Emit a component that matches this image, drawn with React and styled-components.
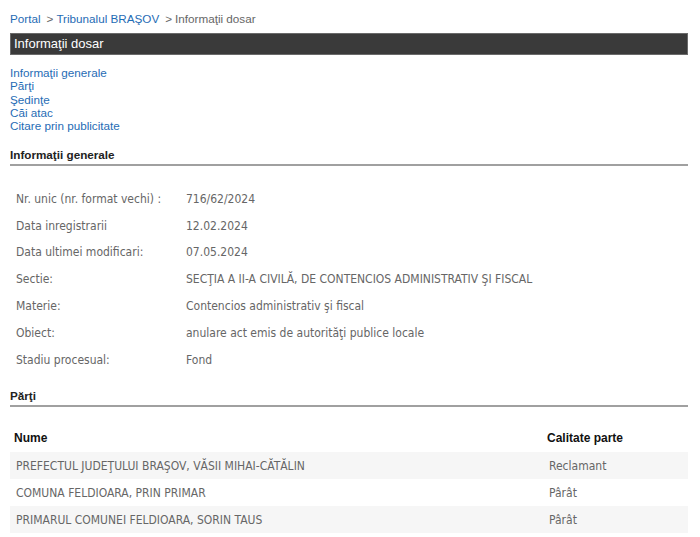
import React from "react";
import styled, { createGlobalStyle } from "styled-components";

const Global = createGlobalStyle`
  body {
    margin: 0;
    background: #fff;
    font-family: "Liberation Sans", Arial, sans-serif;
  }
`;

const Page = styled.div`
  padding: 12px 12px 0 10px;
  width: 678px;
`;

const Crumbs = styled.div`
  font-size: 11.7px;
  color: #666;
  height: 14px;
  line-height: 14px;
  a {
    color: #1f6cb5;
    text-decoration: none;
  }
  span {
    margin: 0 3px 0 6px;
  }
`;

const TitleBar = styled.div`
  margin-top: 7px;
  background: #3a3a3a;
  border: 1px solid #6a6a6a;
  color: #fff;
  font-size: 13px;
  height: 20px;
  line-height: 20px;
  padding-left: 3px;
`;

const Links = styled.div`
  margin-top: 11px;
  display: flex;
  flex-direction: column;
  font-size: 11.7px;
  line-height: 13.3px;
  a {
    color: #1f6cb5;
    text-decoration: none;
  }
`;

const SectionHead = styled.div`
  margin-top: ${(p) => p.$top}px;
  font-size: 11.7px;
  font-weight: bold;
  color: #222;
  padding-bottom: 3px;
  border-bottom: 2px solid #a0a0a0;
`;

const Details = styled.div`
  margin-top: 19px;
  display: flex;
  flex-direction: column;
`;

const DetailRow = styled.div`
  display: grid;
  grid-template-columns: 170px 1fr;
  padding-left: 6px;
  height: 26.8px;
  align-items: center;
  font-family: "DejaVu Sans Condensed", "DejaVu Sans", sans-serif;
  font-size: 12px;
  color: #666;
`;

const Table = styled.div`
  margin-top: 16px;
  display: flex;
  flex-direction: column;
`;

const TRow = styled.div`
  display: grid;
  grid-template-columns: 533px 1fr;
  height: ${(p) => (p.$head ? 29 : 27)}px;
  align-items: center;
  padding-left: 4px;
  background: ${(p) => (p.$alt ? "#f6f6f6" : "#fff")};
  font-family: ${(p) =>
    p.$head
      ? `"Liberation Sans", Arial, sans-serif`
      : `"DejaVu Sans Condensed", "DejaVu Sans", sans-serif`};
  font-weight: ${(p) => (p.$head ? "bold" : "normal")};
  font-size: 12px;
  color: ${(p) => (p.$head ? "#111" : "#666")};
  & > div {
    padding-left: ${(p) => (p.$head ? 0 : 2)}px;
  }
`;

const details = [
  ["Nr. unic (nr. format vechi) :", "716/62/2024"],
  ["Data inregistrarii", "12.02.2024"],
  ["Data ultimei modificari:", "07.05.2024"],
  ["Sectie:", "SECŢIA A II-A CIVILĂ, DE CONTENCIOS ADMINISTRATIV ŞI FISCAL"],
  ["Materie:", "Contencios administrativ şi fiscal"],
  ["Obiect:", "anulare act emis de autorităţi publice locale"],
  ["Stadiu procesual:", "Fond"],
];

const parti = [
  ["PREFECTUL JUDEŢULUI BRAŞOV, VĂSII MIHAI-CĂTĂLIN", "Reclamant"],
  ["COMUNA FELDIOARA, PRIN PRIMAR", "Pârât"],
  ["PRIMARUL COMUNEI FELDIOARA, SORIN TAUS", "Pârât"],
];

export default function App() {
  return (
    <>
      <Global />
      <Page>
        <Crumbs>
          <a href="#">Portal</a>
          <span>&gt;</span>
          <a href="#">Tribunalul BRAŞOV</a>
          <span>&gt;</span>
          Informaţii dosar
        </Crumbs>
        <TitleBar>Informaţii dosar</TitleBar>
        <Links>
          <a href="#">Informaţii generale</a>
          <a href="#">Părţi</a>
          <a href="#">Şedinţe</a>
          <a href="#">Căi atac</a>
          <a href="#">Citare prin publicitate</a>
        </Links>
        <SectionHead $top={16}>Informaţii generale</SectionHead>
        <Details>
          {details.map(([k, v]) => (
            <DetailRow key={k}>
              <div>{k}</div>
              <div>{v}</div>
            </DetailRow>
          ))}
        </Details>
        <SectionHead $top={16}>Părţi</SectionHead>
        <Table>
          <TRow $head>
            <div>Nume</div>
            <div>Calitate parte</div>
          </TRow>
          {parti.map(([n, c], i) => (
            <TRow key={n} $alt={i % 2 === 0}>
              <div>{n}</div>
              <div>{c}</div>
            </TRow>
          ))}
        </Table>
      </Page>
    </>
  );
}
